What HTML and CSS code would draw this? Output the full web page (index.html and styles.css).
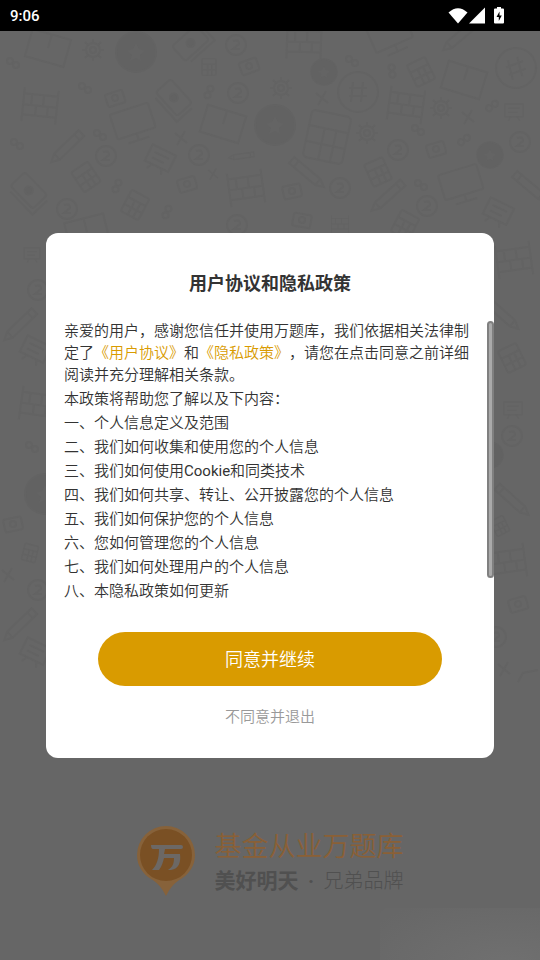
FILE: index.html
```
<!DOCTYPE html>
<html lang="zh-CN">
<head>
<meta charset="utf-8">
<meta name="viewport" content="width=device-width, initial-scale=1">
<title>基金从业万题库</title>
<link rel="stylesheet" href="styles.css">
</head>
<body>
<header class="status">
  <span class="clock">9:06</span>
  <span class="status-icons">
    <svg width="20" height="18" viewBox="0 0 20 18" aria-hidden="true"><path d="M.5 5.500Q10-3 19.500 5.500L10 16.500Z"/></svg>
    <svg width="16" height="18" viewBox="0 0 16 18" aria-hidden="true"><path d="M16 .5v16H0z"/></svg>
    <svg class="battery" width="10" height="18" viewBox="0 0 10 18" aria-hidden="true"><path d="M3 0h4v1.500h2q1 0 1 1v13q0 1-1 1H1q-1 0-1-1v-13q0-1 1-1h2z"/><path class="bolt" d="M5.500 4.500v4H7.800l-3 5.500V10H2.500z"/></svg>
  </span>
</header>
<main class="stage">
  <div class="splash">
    <svg class="doodles" viewBox="0 0 540 660" preserveAspectRatio="xMidYMin slice" aria-hidden="true">
      <defs>
        <g id="book"><path d="M-20-14H20V14H-20ZM0-14V0"/></g>
        <g id="notes"><rect x="-18" y="-13" width="32" height="20" rx="3"/><circle class="solid" cx="-2" cy="-3" r="4"/><path d="M-14 11H18V-9"/></g>
        <g id="disc"><circle class="solid" r="20"/><path class="cut" d="M0-9 3-3 9-1 4 3 5 9 0 6-6 9-4 3-9-1-3-3Z"/></g>
        <g id="coin"><circle r="10"/><path d="M-3-4Q3-6 3-1L-3 4H4"/></g>
        <g id="token"><circle r="20"/><path d="M-5-10-7 10M5-10 3 10M-9-4H9M-9 4H9"/></g>
        <g id="shelf"><path d="M-17-17V17M17-17V17M-17-11H17M-17 0H17M-17 10H17M-9-11V0M3-11V0M-4 0V10M8 0V10"/></g>
        <g id="cam"><rect x="-9" y="-6" width="18" height="13" rx="2"/><circle r="3"/></g>
        <g id="screen"><rect x="-20" y="-14" width="40" height="26" rx="2"/><path d="M0 12V19M-11 19H11"/></g>
        <g id="pencil"><path d="M-22 0-14-4H20V4H-14ZM-14-4V4M14-4V4"/></g>
        <g id="board"><rect x="-13" y="-10" width="26" height="18"/><path d="M-8-4H8M-8 2H5M-5 8-8 14M5 8 8 14"/></g>
        <g id="calc"><rect x="-10" y="-12" width="20" height="24" rx="2"/><path d="M-10-4H10M-10 4H10M-2-4V12M4-4V12"/></g>
        <g id="gear"><circle r="7"/><circle r="3"/><path d="M0-11V-7M0 7V11M-11 0H-7M7 0H11M-8-8-5-5M5 5 8 8M8-8 5-5M-5 5-8 8"/></g>
        <g id="cross"><path d="M-6-5 6 5M4-7-4 7"/></g>
        <g id="link"><circle cx="-3" cy="-2" r="3"/><circle cx="3" cy="2" r="3"/></g>
      </defs>
      <g transform="translate(0 -31)">
        <use href="#book" transform="translate(48 48) rotate(16)"/>
        <use href="#gear" transform="translate(93 50)"/>
        <use href="#disc" transform="translate(136 52)"/>
        <use href="#notes" transform="translate(194 44) rotate(-42)"/>
        <use href="#coin" transform="translate(236 45)"/>
        <use href="#cam" transform="translate(249 66) rotate(-20)"/>
        <use href="#link" transform="translate(13 63)"/>
        <use href="#calc" transform="translate(209 67) scale(.7)"/>
        <use href="#shelf" transform="translate(40 106) rotate(6)"/>
        <use href="#link" transform="translate(85 88)"/>
        <use href="#cam" transform="translate(115 98) rotate(-18)"/>
        <use href="#notes" transform="translate(173 101) rotate(48)"/>
        <use href="#link" transform="translate(209 92) rotate(80)"/>
        <use href="#coin" transform="translate(238 93)"/>
        <use href="#screen" transform="translate(133 122) rotate(-18)"/>
        <use href="#book" transform="translate(223 124) rotate(17)"/>
        <use href="#disc" transform="translate(275 125)"/>
        <use href="#pencil" transform="translate(67 147) rotate(-44)"/>
        <use href="#link" transform="translate(100 135)"/>
        <use href="#link" transform="translate(17 144)"/>
        <use href="#cross" transform="translate(181 138)"/>
        <use href="#coin" transform="translate(106 156)"/>
        <use href="#board" transform="translate(160 159) rotate(26)"/>
        <use href="#coin" transform="translate(199 155)"/>
        <use href="#pencil" transform="translate(242 156) rotate(-8) scale(.6)"/>
        <use href="#calc" transform="translate(86 177) rotate(-34)"/>
        <use href="#link" transform="translate(117 186) rotate(80)"/>
        <use href="#cam" transform="translate(187 184) rotate(-16)"/>
        <use href="#cross" transform="translate(213 174) scale(.8)"/>
        <use href="#shelf" transform="translate(246 188) rotate(-8)"/>
        <use href="#notes" transform="translate(28 194) rotate(46)"/>
        <use href="#coin" transform="translate(67 209)"/>
        <use href="#calc" transform="translate(135 205) rotate(28)"/>
        <use href="#link" transform="translate(167 212) rotate(80)"/>
        <use href="#book" transform="translate(87 232) rotate(-14)"/>
        <use href="#coin" transform="translate(237 225)"/>
        <use href="#shelf" transform="translate(304 42) rotate(2)"/>
        <use href="#screen" transform="translate(390 34) rotate(-24)"/>
        <use href="#pencil" transform="translate(460 36) rotate(-40)"/>
        <use href="#disc" transform="translate(324 72) scale(.65)"/>
        <use href="#link" transform="translate(352 61)"/>
        <use href="#token" transform="translate(358 92)"/>
        <use href="#link" transform="translate(392 71) rotate(50)"/>
        <use href="#calc" transform="translate(421 72) rotate(-26)"/>
        <use href="#book" transform="translate(464 80) rotate(17)"/>
        <use href="#token" transform="translate(516 68) rotate(-20)"/>
        <use href="#gear" transform="translate(281 88)"/>
        <use href="#cross" transform="translate(322 98)"/>
        <use href="#shelf" transform="translate(406 105) rotate(8)"/>
        <use href="#link" transform="translate(418 130)"/>
        <use href="#gear" transform="translate(441 108)"/>
        <use href="#cross" transform="translate(468 117)"/>
        <use href="#link" transform="translate(492 106) rotate(-70)"/>
        <use href="#board" transform="translate(514 111) scale(.7)"/>
        <use class="large" href="#calc" transform="translate(327 137) rotate(12) scale(2)"/>
        <use href="#gear" transform="translate(367 133)"/>
        <use href="#coin" transform="translate(398 150)"/>
        <use href="#cam" transform="translate(436 149) rotate(-16)"/>
        <use href="#link" transform="translate(464 140) rotate(-70)"/>
        <use href="#coin" transform="translate(520 142)"/>
        <use href="#disc" transform="translate(490 155) scale(.65)"/>
        <use href="#pencil" transform="translate(307 173) rotate(220)"/>
        <use href="#calc" transform="translate(378 172) rotate(-24)"/>
        <use href="#coin" transform="translate(340 188)"/>
        <use href="#cam" transform="translate(292 191) rotate(-12)"/>
        <use href="#pencil" transform="translate(388 196) rotate(-42)"/>
        <use href="#link" transform="translate(421 185)"/>
        <use href="#screen" transform="translate(461 183) rotate(-17)"/>
        <use href="#coin" transform="translate(427 206)"/>
        <use href="#pencil" transform="translate(530 187) rotate(220)"/>
        <use href="#board" transform="translate(498 212) rotate(26)"/>
        <use href="#cam" transform="translate(302 220) rotate(10)"/>
        <use href="#shelf" transform="translate(340 224) scale(.5)"/>
        <use href="#calc" transform="translate(405 225) rotate(28)"/>
        <use href="#board" transform="translate(32 254) scale(.6)"/>
        <use href="#coin" transform="translate(38 290)"/>
        <use href="#pencil" transform="translate(20 325) rotate(-44)"/>
        <use href="#board" transform="translate(35 350) rotate(26)"/>
        <use href="#shelf" transform="translate(38 405) rotate(8)"/>
        <use href="#link" transform="translate(32 447)"/>
        <use href="#disc" transform="translate(45 494)"/>
        <use href="#cam" transform="translate(13 524) rotate(-12)"/>
        <use href="#calc" transform="translate(30 553) rotate(14) scale(.7)"/>
        <use href="#cross" transform="translate(8 575)"/>
        <use href="#coin" transform="translate(38 590)"/>
        <use href="#pencil" transform="translate(20 625) rotate(-44)"/>
        <use href="#board" transform="translate(35 652) rotate(26)"/>
        <use href="#shelf" transform="translate(514 260) rotate(-8)"/>
        <use href="#pencil" transform="translate(502 314) rotate(222)"/>
        <use href="#calc" transform="translate(512 358) rotate(-26)"/>
        <use href="#board" transform="translate(513 409) scale(.7)"/>
        <use href="#coin" transform="translate(512 436)"/>
        <use href="#disc" transform="translate(490 455) scale(.65)"/>
        <use href="#pencil" transform="translate(512 500) rotate(222)"/>
        <use href="#calc" transform="translate(500 526) rotate(-26) scale(.7)"/>
        <use href="#shelf" transform="translate(508 562) rotate(-8)"/>
        <use href="#cam" transform="translate(518 604) rotate(-16)"/>
        <use href="#coin" transform="translate(496 637)"/>
        <use href="#cross" transform="translate(504 669)"/>
        <path d="M518 682 523 673 538 670"/>
      </g>
    </svg>
    <div class="brand">
      <svg class="pin" width="60" height="72" viewBox="0 0 60 72" aria-hidden="true">
        <path class="pin-rim" d="M29 1A29 29 0 0 1 58 30C58 41 52 49 44 54C37 58 33 63 29 71C25 63 21 58 14 54C6 49 0 41 0 30A29 29 0 0 1 29 1Z"/>
        <circle class="pin-face" cx="29" cy="30" r="26"/>
        <path class="pin-mark" d="M14 20H44Q46 20 46 22Q46 24 44 24H28L27 29H43C44 37 42 44 34 45L31 45C36 42 37 38 37 33H27C26 37 25 41 22 45H15C20 40 22 33 22 24H16Q14 24 14 20Z"/>
      </svg>
      <div class="brand-text">
        <span class="brand-name">基金从业万题库</span>
        <span class="brand-sub"><b>美好明天</b><i>·</i><span>兄弟品牌</span></span>
      </div>
    </div>
  </div>
  <div class="overlay">
    <section class="dialog" role="dialog" aria-labelledby="dialog-title">
      <h1 id="dialog-title">用户协议和隐私政策</h1>
      <div class="policy">
        <p>亲爱的用户，感谢您信任并使用万题库，我们依据相关法律制定了<a href="#terms">《用户协议》</a>和<a href="#privacy">《隐私政策》</a>，请您在点击同意之前详细阅读并充分理解相关条款。</p>
        <ul>
          <li>本政策将帮助您了解以及下内容：</li>
          <li>一、个人信息定义及范围</li>
          <li>二、我们如何收集和使用您的个人信息</li>
          <li>三、我们如何使用<span class="latin">Cookie</span>和同类技术</li>
          <li>四、我们如何共享、转让、公开披露您的个人信息</li>
          <li>五、我们如何保护您的个人信息</li>
          <li>六、您如何管理您的个人信息</li>
          <li>七、我们如何处理用户的个人信息</li>
          <li>八、本隐私政策如何更新</li>
        </ul>
        <span class="thumb"></span>
      </div>
      <button class="agree" type="button">同意并继续</button>
      <button class="decline" type="button">不同意并退出</button>
    </section>
  </div>
</main>
</body>
</html>
```
FILE: styles.css
```
* { box-sizing: border-box; }

body {
  margin: 0;
  min-height: 100vh;
  display: flex;
  flex-direction: column;
  background: #666;
  color: #333;
  font-family: Roboto, "Noto Sans CJK SC", sans-serif;
  text-spacing-trim: space-all;
}

.status {
  display: flex;
  align-items: center;
  justify-content: space-between;
  height: 31px;
  padding: 0 36px 0 10px;
  background: #000;
  color: #fff;
}
.clock { font-size: 15px; font-weight: 500; }
.status-icons { display: flex; gap: 1px; }
.status-icons svg { fill: #fff; }
.status-icons .battery { margin-left: 8px; }
.battery .bolt { fill: #000; }

.stage { flex: 1; display: grid; }
.splash, .overlay { grid-area: 1 / 1; min-width: 0; }

.splash {
  position: relative;
  display: flex;
  flex-direction: column;
  justify-content: flex-end;
  align-items: center;
  padding-bottom: 63px;
  overflow: hidden;
}
.splash::after {
  content: "";
  position: absolute;
  right: 0;
  bottom: 0;
  width: 160px;
  height: 52px;
  border-top-left-radius: 8px;
  background: radial-gradient(ellipse at 80% 110%, #707070, #676767 90%);
}
.doodles {
  position: absolute;
  top: 0;
  left: 0;
  width: 100%;
  fill: none;
  stroke: #636363;
  stroke-width: 2;
}
.doodles .solid { fill: #626262; }
.doodles .cut { fill: #646464; stroke: none; }
.doodles .large { stroke-width: 1; }

.brand { display: flex; align-items: center; gap: 18px; }
.pin { display: block; }
.pin-rim { fill: #87623a; }
.pin-face { fill: #7a5024; }
.pin-mark { fill: #6c6865; }
.brand-text { display: flex; flex-direction: column; padding-top: 4px; }
.brand-name {
  color: #8a6036;
  font-size: 27px;
  font-weight: 350;
  line-height: 36px;
}
.brand-sub {
  display: flex;
  justify-content: space-between;
  color: #505050;
  font-size: 20px;
  font-weight: 300;
  line-height: 32px;
}
.brand-sub b { font-size: 21px; font-weight: 700; }
.brand-sub i { font-style: normal; font-weight: 700; }

.overlay {
  position: relative;
  display: flex;
  flex-direction: column;
  justify-content: center;
  padding: 0 46px;
}
.dialog {
  display: flex;
  flex-direction: column;
  padding: 36px 0 26px;
  border-radius: 12px;
  background: #fff;
}
h1 {
  margin: 0 0 21px;
  font-size: 18px;
  font-weight: 700;
  line-height: 30px;
  text-align: center;
}
.policy {
  position: relative;
  padding: 0 24px 0 18px;
  font-size: 15px;
  font-weight: 350;
}
.policy p { margin: 0 0 1px; line-height: 22px; }
.policy a { color: #d99b00; text-decoration: none; }
.policy ul {
  margin: 0;
  padding: 0;
  list-style: none;
  line-height: 24px;
}
.latin { font-weight: 400; }
.thumb {
  position: absolute;
  top: 1px;
  right: 0;
  width: 7px;
  height: 257px;
  border: 2px solid #808080;
  border-radius: 4px;
  background: #aaa;
}
button {
  border: 0;
  padding: 0;
  font-family: inherit;
  font-weight: 350;
}
.agree {
  height: 54px;
  margin: 29px 52px 15px;
  padding-bottom: 2px;
  border-radius: 27px;
  background: #d99b00;
  color: #fff;
  font-size: 18px;
}
.decline {
  align-self: center;
  height: 31px;
  padding-bottom: 2px;
  background: none;
  color: #999;
  font-size: 15px;
}
```
